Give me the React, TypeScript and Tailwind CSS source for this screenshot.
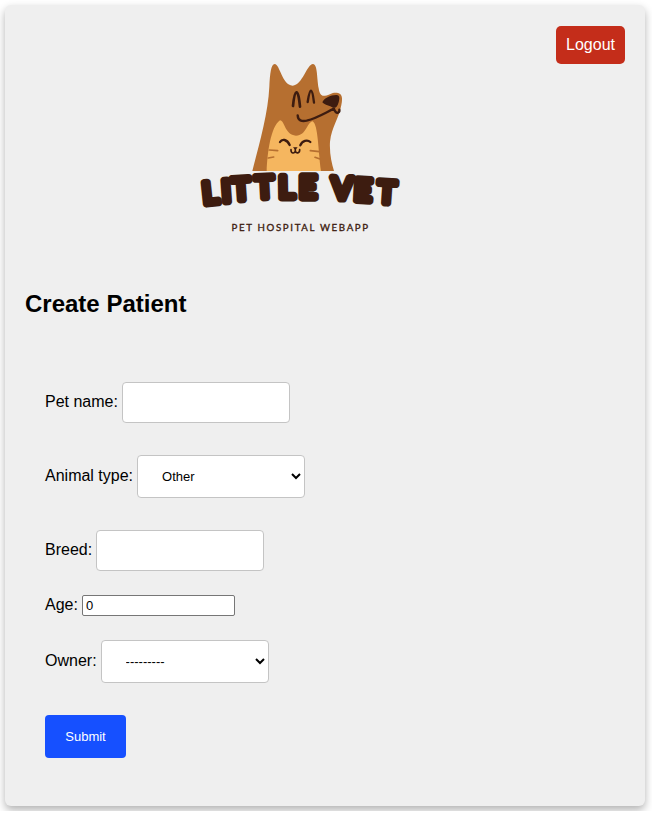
import type { ReactNode } from "react";

const boxed =
  "w-[168px] rounded border border-[#c4c4c4] bg-white px-5 py-3 text-[13px] text-black";

function Logo() {
  return (
    <svg
      viewBox="30 30 600 540"
      className="h-[180px] w-[200px] overflow-visible"
      role="img"
      aria-label="Little Vet Pet Hospital Webapp"
    >
      <path
        fill="#b66f30"
        d="M187 363C205 290 234 195 238 110C240 70 243 43 254 42C270 42 275 105 308 107C338 105 350 43 369 42C383 44 380 80 386 115C389 135 395 139 405 137C420 134 425 127 440 128C458 130 458 145 454 165C447 205 425 230 420 275C418 310 425 340 432 363Z"
      />
      <path
        fill="#f5b65f"
        d="M230 363C232 310 242 230 270 211C285 213 284 255 318 257C350 257 350 217 368 214C385 225 384 300 393 363Z"
      />
      <g fill="none" stroke="#3d1c10" strokeLinecap="round" strokeLinejoin="round">
        <path strokeWidth="8" d="M309 168C311 148 314 128 319 127C325 126 328 150 330 170" />
        <path strokeWidth="7" d="M353 156C356 138 358 123 363 122C368 123 370 142 372 158" />
        <path strokeWidth="7" d="M323 196C324 212 335 215 350 212C382 204 406 188 432 176C434 184 439 190 444 188C448 186 449 183 448 179" />
        <path strokeWidth="7" d="M270 276C276 266 291 267 299 285M331 286C337 272 352 268 361 276" />
        <path strokeWidth="5" d="M303 299C302 311 314 312 316 303L316 296M316 303C318 312 330 310 329 299" />
      </g>
      <path
        fill="#3d1c10"
        d="M397 157C401 145 424 134 440 135C450 136 449 145 446 157C442 170 438 175 429 173C419 167 405 166 397 157ZM309 292H323L316 300Z"
      />
      <path
        fill="none"
        stroke="#b66f30"
        strokeWidth="5"
        strokeLinecap="round"
        d="M238 300L263 302M235 324L251 321M361 302L388 305M375 322L390 327"
      />
      <text
        x="41 98 129 199 267 328 425 491 562"
        y="463 456 451 445 444 444 446 451 457"
        rotate="-6 -4 -4 -3 -1 0 1 3 4"
        fill="#3d1c10"
        stroke="#3d1c10"
        strokeWidth="22"
        strokeLinejoin="round"
        fontSize="90"
        fontWeight="400"
        className="font-['Lato',sans-serif]"
      >
        LITTLEVET
      </text>
      <text
        x="332"
        y="542"
        textAnchor="middle"
        fill="#3d1c10"
        stroke="#3d1c10"
        strokeWidth="1"
        fontSize="29"
        letterSpacing="5"
        className="font-['Lato',sans-serif]"
      >
        PET HOSPITAL WEBAPP
      </text>
    </svg>
  );
}

function Field({ id, label, children }: { id: string; label: string; children: ReactNode }) {
  return (
    <div className="flex items-baseline gap-1">
      <label htmlFor={id} className="leading-[18px]">
        {label}
      </label>
      {children}
    </div>
  );
}

export default function App() {
  return (
    <main className="m-[5px] mr-[7px] rounded-md bg-[#efefef] px-5 pt-[21px] pb-12 font-['Liberation_Sans',Arial,sans-serif] text-base text-black shadow-[0_4px_8px_rgba(0,0,0,0.3)]">
      <header className="flex items-start">
        <div className="flex flex-1 justify-center pt-[34px] pl-[18px]">
          <Logo />
        </div>
        <button type="button" className="h-[38px] rounded-[5px] bg-[#c42d1a] px-[10px] text-white">
          Logout
        </button>
      </header>

      <h1 className="mt-[50px] text-2xl leading-7 font-bold">Create Patient</h1>

      <form className="mt-16 px-5" onSubmit={(e) => e.preventDefault()}>
        <div className="flex flex-col gap-8">
          <Field id="name" label="Pet name:">
            <input id="name" type="text" className={`${boxed} h-[41px]`} />
          </Field>
          <Field id="type" label="Animal type:">
            <select id="type" className={`${boxed} h-[43px]`} defaultValue="Other">
              <option>Other</option>
              <option>Dog</option>
              <option>Cat</option>
            </select>
          </Field>
          <Field id="breed" label="Breed:">
            <input id="breed" type="text" className={`${boxed} h-[41px]`} />
          </Field>
        </div>
        <div className="my-6">
          <Field id="age" label="Age:">
            <input
              id="age"
              type="number"
              defaultValue={0}
              className="h-[21px] w-[153px] rounded-xs border border-[#767676] bg-white px-[3px] text-[13px]"
            />
          </Field>
        </div>
        <Field id="owner" label="Owner:">
          <select id="owner" className={`${boxed} h-[43px]`}>
            <option>---------</option>
          </select>
        </Field>
        <button
          type="submit"
          className="mt-8 h-[43px] w-[81px] rounded bg-[#1650ff] text-[13px] text-white"
        >
          Submit
        </button>
      </form>
    </main>
  );
}
